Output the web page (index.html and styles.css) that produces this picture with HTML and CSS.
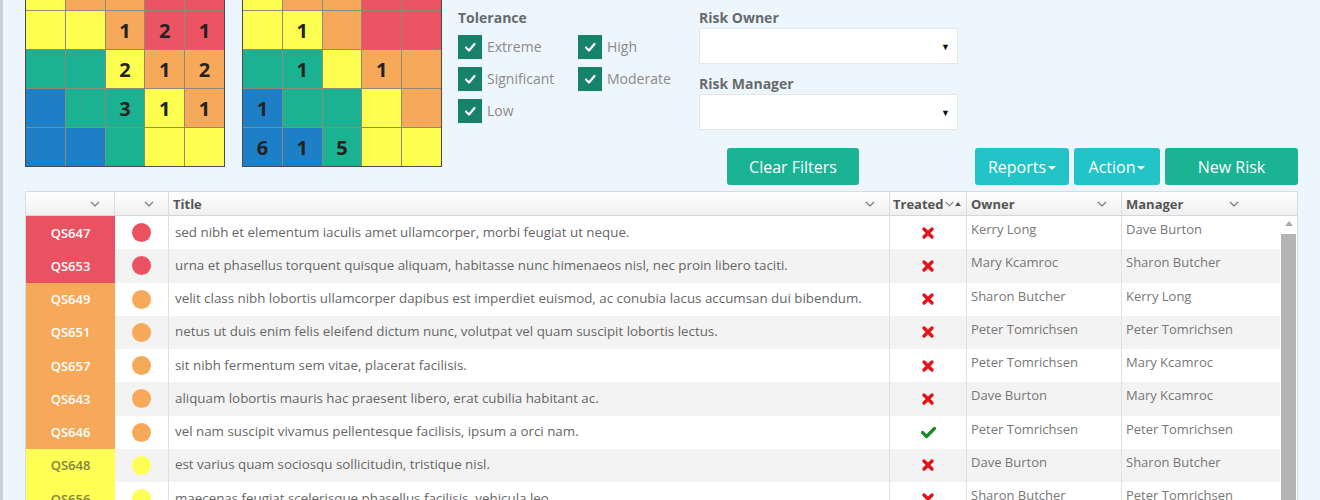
FILE: index.html
```html
<!DOCTYPE html>
<html lang="en">
  <head>
    <meta charset="UTF-8" />
    <meta name="viewport" content="width=device-width, initial-scale=1.0" />
    <title>Risk Register</title>
    <link rel="stylesheet" href="styles.css">
  </head>
  <body>
    <div class="page">
      <!-- Heat maps and filters -->
      <section class="top">
        <div class="matrices">
          <div class="matrix">
            <div class="y"></div><div class="o"></div><div class="o"></div><div class="r"></div><div class="r"></div>
            <div class="y"></div><div class="y"></div><div class="o">1</div><div class="r">2</div><div class="r">1</div>
            <div class="g"></div><div class="g"></div><div class="y">2</div><div class="o">1</div><div class="o">2</div>
            <div class="b"></div><div class="g"></div><div class="g">3</div><div class="y">1</div><div class="o">1</div>
            <div class="b"></div><div class="b"></div><div class="g"></div><div class="y"></div><div class="y"></div>
          </div>
          <div class="matrix">
            <div class="y"></div><div class="o"></div><div class="o"></div><div class="r"></div><div class="r"></div>
            <div class="y"></div><div class="y">1</div><div class="o"></div><div class="r"></div><div class="r"></div>
            <div class="g"></div><div class="g">1</div><div class="y"></div><div class="o">1</div><div class="o"></div>
            <div class="b">1</div><div class="g"></div><div class="g"></div><div class="y"></div><div class="o"></div>
            <div class="b">6</div><div class="b">1</div><div class="g">5</div><div class="y"></div><div class="y"></div>
          </div>
        </div>

        <div class="side">
          <div class="filters">
            <div class="tolerance">
              <div class="label">Tolerance</div>
              <div class="checks">
                <div class="chk"><span class="box"><svg width="14" height="14" viewBox="0 0 14 14"><polyline points="3,7.5 6,10.5 11.5,4" /></svg></span>Extreme</div>
                <div class="chk"><span class="box"><svg width="14" height="14" viewBox="0 0 14 14"><polyline points="3,7.5 6,10.5 11.5,4" /></svg></span>High</div>
                <div class="chk"><span class="box"><svg width="14" height="14" viewBox="0 0 14 14"><polyline points="3,7.5 6,10.5 11.5,4" /></svg></span>Significant</div>
                <div class="chk"><span class="box"><svg width="14" height="14" viewBox="0 0 14 14"><polyline points="3,7.5 6,10.5 11.5,4" /></svg></span>Moderate</div>
                <div class="chk"><span class="box"><svg width="14" height="14" viewBox="0 0 14 14"><polyline points="3,7.5 6,10.5 11.5,4" /></svg></span>Low</div>
              </div>
            </div>
            <div class="risk">
              <div class="label">Risk Owner</div>
              <div class="select"><span class="arrow">&#9660;</span></div>
              <div class="label second">Risk Manager</div>
              <div class="select"><span class="arrow">&#9660;</span></div>
            </div>
          </div>

          <div class="buttons">
            <button class="btn btn-primary clear">Clear Filters</button>
            <div class="btn-group">
              <button class="btn btn-info reports">Reports<span class="caret"></span></button>
              <button class="btn btn-info action">Action <span class="caret"></span></button>
              <button class="btn btn-primary new">New Risk</button>
            </div>
          </div>
        </div>
      </section>

      <!-- Risk grid -->
      <section class="grid-table">
        <div class="thead">
          <div class="th"><svg class="chev" width="10" height="6" viewBox="0 0 10 6"><polyline points="1,1 5,5 9,1" /></svg></div>
          <div class="th"><svg class="chev" width="10" height="6" viewBox="0 0 10 6"><polyline points="1,1 5,5 9,1" /></svg></div>
          <div class="th">Title<svg class="chev" width="10" height="6" viewBox="0 0 10 6"><polyline points="1,1 5,5 9,1" /></svg></div>
          <div class="th treated-h">Treated<svg class="chev-s" width="9" height="6" viewBox="0 0 10 6"><polyline points="1,1 5,5 9,1" /></svg><svg class="sort" width="6" height="5" viewBox="0 0 6 5"><polygon points="0,5 3,1 6,5" /></svg></div>
          <div class="th">Owner<svg class="chev" width="10" height="6" viewBox="0 0 10 6"><polyline points="1,1 5,5 9,1" /></svg></div>
          <div class="th last">Manager<svg class="chev" width="10" height="6" viewBox="0 0 10 6"><polyline points="1,1 5,5 9,1" /></svg></div>
        </div>
        <div class="tbody">
          <div class="rows">
            <div class="row">
              <div class="td code red">QS647</div>
              <div class="td dot-cell"><span class="dot red"></span></div>
              <div class="td title">sed nibh et elementum iaculis amet ullamcorper, morbi feugiat ut neque.</div>
              <div class="td treated"><svg class="no" width="14" height="14" viewBox="0 0 14 14"><path d="M3 3L11 11M11 3L3 11" /></svg></div>
              <div class="td person">Kerry Long</div>
              <div class="td person">Dave Burton</div>
            </div>
            <div class="row">
              <div class="td code red">QS653</div>
              <div class="td dot-cell"><span class="dot red"></span></div>
              <div class="td title">urna et phasellus torquent quisque aliquam, habitasse nunc himenaeos nisl, nec proin libero taciti.</div>
              <div class="td treated"><svg class="no" width="14" height="14" viewBox="0 0 14 14"><path d="M3 3L11 11M11 3L3 11" /></svg></div>
              <div class="td person">Mary Kcamroc</div>
              <div class="td person">Sharon Butcher</div>
            </div>
            <div class="row">
              <div class="td code orange">QS649</div>
              <div class="td dot-cell"><span class="dot orange"></span></div>
              <div class="td title">velit class nibh lobortis ullamcorper dapibus est imperdiet euismod, ac conubia lacus accumsan dui bibendum.</div>
              <div class="td treated"><svg class="no" width="14" height="14" viewBox="0 0 14 14"><path d="M3 3L11 11M11 3L3 11" /></svg></div>
              <div class="td person">Sharon Butcher</div>
              <div class="td person">Kerry Long</div>
            </div>
            <div class="row">
              <div class="td code orange">QS651</div>
              <div class="td dot-cell"><span class="dot orange"></span></div>
              <div class="td title">netus ut duis enim felis eleifend dictum nunc, volutpat vel quam suscipit lobortis lectus.</div>
              <div class="td treated"><svg class="no" width="14" height="14" viewBox="0 0 14 14"><path d="M3 3L11 11M11 3L3 11" /></svg></div>
              <div class="td person">Peter Tomrichsen</div>
              <div class="td person">Peter Tomrichsen</div>
            </div>
            <div class="row">
              <div class="td code orange">QS657</div>
              <div class="td dot-cell"><span class="dot orange"></span></div>
              <div class="td title">sit nibh fermentum sem vitae, placerat facilisis.</div>
              <div class="td treated"><svg class="no" width="14" height="14" viewBox="0 0 14 14"><path d="M3 3L11 11M11 3L3 11" /></svg></div>
              <div class="td person">Peter Tomrichsen</div>
              <div class="td person">Mary Kcamroc</div>
            </div>
            <div class="row">
              <div class="td code orange">QS643</div>
              <div class="td dot-cell"><span class="dot orange"></span></div>
              <div class="td title">aliquam lobortis mauris hac praesent libero, erat cubilia habitant ac.</div>
              <div class="td treated"><svg class="no" width="14" height="14" viewBox="0 0 14 14"><path d="M3 3L11 11M11 3L3 11" /></svg></div>
              <div class="td person">Dave Burton</div>
              <div class="td person">Mary Kcamroc</div>
            </div>
            <div class="row">
              <div class="td code orange">QS646</div>
              <div class="td dot-cell"><span class="dot orange"></span></div>
              <div class="td title">vel nam suscipit vivamus pellentesque facilisis, ipsum a orci nam.</div>
              <div class="td treated"><svg class="yes" width="17" height="13" viewBox="0 0 17 13"><polyline points="2.5,6.5 6.5,10.5 14.5,2.5" /></svg></div>
              <div class="td person">Peter Tomrichsen</div>
              <div class="td person">Peter Tomrichsen</div>
            </div>
            <div class="row">
              <div class="td code yellow">QS648</div>
              <div class="td dot-cell"><span class="dot yellow"></span></div>
              <div class="td title">est varius quam sociosqu sollicitudin, tristique nisl.</div>
              <div class="td treated"><svg class="no" width="14" height="14" viewBox="0 0 14 14"><path d="M3 3L11 11M11 3L3 11" /></svg></div>
              <div class="td person">Dave Burton</div>
              <div class="td person">Sharon Butcher</div>
            </div>
            <div class="row">
              <div class="td code yellow">QS656</div>
              <div class="td dot-cell"><span class="dot yellow"></span></div>
              <div class="td title">maecenas feugiat scelerisque phasellus facilisis, vehicula leo.</div>
              <div class="td treated"><svg class="no" width="14" height="14" viewBox="0 0 14 14"><path d="M3 3L11 11M11 3L3 11" /></svg></div>
              <div class="td person">Sharon Butcher</div>
              <div class="td person">Peter Tomrichsen</div>
            </div>
          </div>
          <div class="scroll">
            <svg class="up" width="8" height="5" viewBox="0 0 8 5"><polygon points="0,5 4,0 8,5" /></svg>
            <div class="thumb"></div>
          </div>
        </div>
      </section>
    </div>
  </body>
</html>
```

FILE: styles.css
```css
* {
  box-sizing: border-box;
}

body {
  margin: 0;
  height: 500px;
  overflow: hidden;
  background-color: #eef6fd;
  border-left: 3px solid #c8d0d9;
  font-family: "Open Sans", "Liberation Sans", sans-serif;
  color: #676a6c;
}

.page {
  padding: 0 22px;
}

/* Top area: heat maps + filters */
.top {
  display: flex;
  align-items: flex-start;
}

.matrices {
  display: flex;
  gap: 17px;
  margin-top: -29px;
}

.matrix {
  display: grid;
  grid-template-columns: repeat(5, 1fr);
  grid-template-rows: repeat(5, 38px);
  gap: 1px;
  width: 200px;
  background-color: #8c8a78;
  border: 1px solid #4a4a4a;
}

.matrix div {
  display: flex;
  align-items: center;
  justify-content: center;
  font-size: 20px;
  font-weight: 700;
  color: #222;
}

.matrix .r { background-color: #ec5363; }
.matrix .o { background-color: #f7a95a; }
.matrix .y { background-color: #fefe50; }
.matrix .g { background-color: #1bb291; }
.matrix .b { background-color: #1d80c6; }

.side {
  flex: 1;
  margin-left: 16px;
}

.filters {
  display: flex;
}

.label {
  font-size: 14px;
  font-weight: 700;
  line-height: 20px;
  color: #676a6c;
}

.tolerance {
  width: 241px;
  padding-top: 8px;
}

.checks {
  display: grid;
  grid-template-columns: 120px auto;
  row-gap: 8px;
  margin-top: 7px;
}

.chk {
  display: flex;
  align-items: center;
  gap: 5px;
  height: 24px;
  padding-bottom: 2px;
  font-size: 14px;
  color: #8a8a8a;
}

.box {
  display: flex;
  align-items: center;
  justify-content: center;
  flex-shrink: 0;
  width: 24px;
  height: 24px;
  margin-top: 2px;
  background-color: #17826c;
}

.box polyline {
  fill: none;
  stroke: #fff;
  stroke-width: 2.2;
  stroke-linecap: round;
  stroke-linejoin: round;
}

.risk {
  width: 259px;
  padding-top: 8px;
}

.risk .second {
  margin-top: 10px;
}

.select {
  display: flex;
  align-items: center;
  justify-content: flex-end;
  height: 36px;
  padding-right: 7px;
  background-color: #fff;
  border: 1px solid #e5e6e7;
}

.select .arrow {
  font-size: 9px;
  color: #111;
}

/* Buttons */
.buttons {
  display: flex;
  margin-top: 18px;
}

.btn-group {
  display: flex;
  gap: 5px;
  margin-left: auto;
}

.btn {
  display: flex;
  align-items: center;
  justify-content: center;
  height: 37px;
  padding: 0;
  border: none;
  border-radius: 3px;
  font-family: inherit;
  font-size: 16px;
  color: #fff;
}

.btn-primary { background-color: #1ab394; }
.btn-info { background-color: #23c4c8; }

.clear { width: 132px; margin-left: 269px; }
.reports { width: 94px; }
.action { width: 86px; }
.new { width: 133px; }

.caret {
  display: inline-block;
  margin-left: 2px;
  margin-top: 2px;
  border-top: 4px solid #fff;
  border-left: 4px solid transparent;
  border-right: 4px solid transparent;
}

/* Grid */
.grid-table {
  margin-top: 6px;
  background-color: #fff;
  border: 1px solid #dadada;
}

.thead {
  display: grid;
  grid-template-columns: 89px 54px 721px 77px 155px 1fr;
  height: 24px;
  background: linear-gradient(#ffffff, #efefef);
  border-bottom: 1px solid #d6d6d6;
}

.th {
  display: flex;
  align-items: center;
  padding: 0 14px 0 4px;
  border-right: 1px solid #dcdcdc;
  font-size: 13px;
  font-weight: 700;
  color: #555;
}

.th.last {
  border-right: none;
  padding-right: 58px;
}

.th.treated-h {
  padding: 0 2px 0 3px;
}

.chev {
  margin-left: auto;
}

.chev polyline,
.chev-s polyline {
  fill: none;
  stroke: #777;
  stroke-width: 1.2;
}

.chev-s {
  margin-left: 1px;
}

.sort {
  margin-left: 1px;
  fill: #555;
}

.tbody {
  display: flex;
}

.rows {
  flex: 1;
}

.row {
  display: grid;
  grid-template-columns: 89px 54px 721px 77px 155px 1fr;
  height: 33.25px;
}

.row:nth-child(even) {
  background-color: #f3f3f3;
}

.td {
  display: flex;
  align-items: center;
  border-right: 1px solid #e0e0e0;
  font-size: 13px;
  color: #666;
  white-space: nowrap;
  overflow: hidden;
}

.td:last-child {
  border-right: none;
}

.code {
  justify-content: center;
  border-right: none;
  font-weight: 600;
  color: #fff;
}

.code.red { background-color: #ea5261; }
.code.orange { background-color: #f7a95a; }
.code.yellow { background-color: #ffff55; color: #85853e; }

.dot-cell {
  justify-content: center;
}

.dot {
  width: 19px;
  height: 19px;
  border-radius: 50%;
}

.dot.red { background-color: #ea5261; }
.dot.orange { background-color: #f7a95a; }
.dot.yellow { background-color: #ffff55; }

.title {
  padding: 0 0 2px 6px;
  font-size: 13.35px;
}

.treated {
  justify-content: center;
}

.no path {
  fill: none;
  stroke: #e3131b;
  stroke-width: 3.4;
  stroke-linecap: round;
}

.yes polyline {
  fill: none;
  stroke: #1b8a24;
  stroke-width: 3.2;
  stroke-linecap: round;
  stroke-linejoin: round;
}

.person {
  align-items: flex-start;
  padding: 3px 0 0 4px;
  line-height: 20px;
  color: #777;
}

.scroll {
  display: flex;
  flex-direction: column;
  align-items: center;
  width: 17px;
  padding: 5px 1px 0;
}

.scroll .up {
  fill: #aaa;
}

.thumb {
  align-self: stretch;
  height: 300px;
  margin-top: 8px;
  background-color: #b4b4b4;
}
```
